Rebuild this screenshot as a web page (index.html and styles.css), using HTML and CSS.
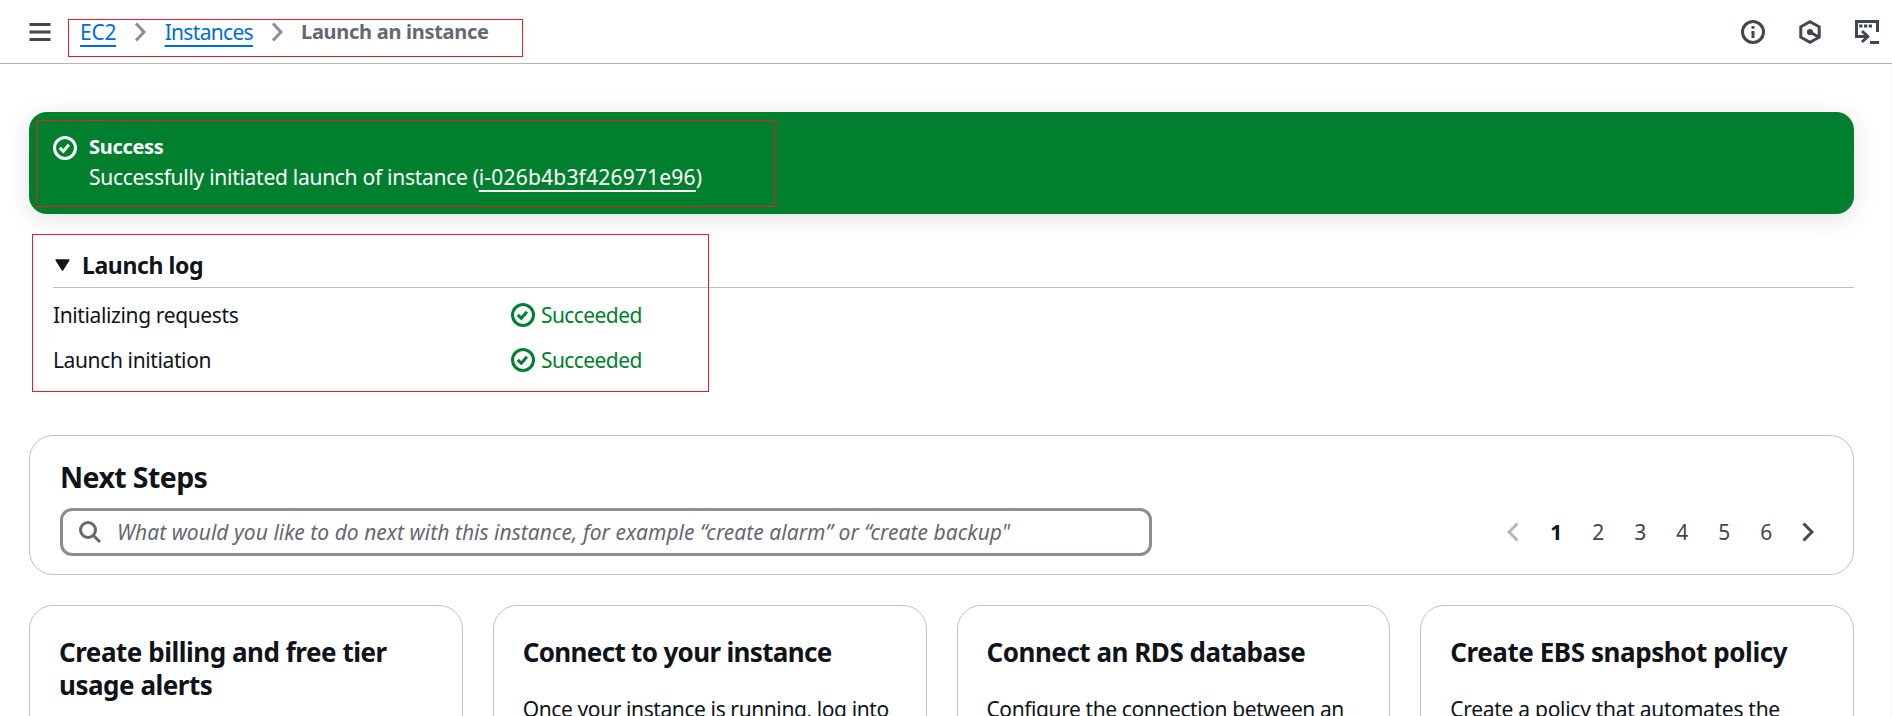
FILE: index.html
```html
<!DOCTYPE html>
<html lang="en">
<head>
<meta charset="utf-8">
<title>Launch an instance | EC2</title>
<link rel="stylesheet" href="styles.css">
</head>
<body>
<svg class="defs" aria-hidden="true">
  <symbol id="check" viewBox="0 0 16 16"><circle cx="8" cy="8" r="7"/><path d="m4.5 7.9 2.4 2.3 3.7-4.4"/></symbol>
</svg>
<header class="topbar">
  <svg class="menu" viewBox="0 0 21 18"><path d="M0 1.5h21M0 9h21M0 16.5h21"/></svg>
  <nav class="crumbs">
    <a href="#">EC2</a>
    <svg class="sep" viewBox="0 0 12 20"><path d="m2 1.5 8 8.5-8 8.5"/></svg>
    <a class="narrow" href="#">Instances</a>
    <svg class="sep" viewBox="0 0 12 20"><path d="m2 1.5 8 8.5-8 8.5"/></svg>
    <b class="current">Launch an instance</b>
  </nav>
  <div class="tools">
    <svg viewBox="0 0 24 24"><circle cx="12" cy="12" r="10.5"/><path d="M12 6v2.7M12 11v7"/></svg>
    <svg viewBox="0 0 24 24"><path d="M12 1.7 21.2 6.8v10.4L12 22.3 2.8 17.2V6.8zM12 12l8.5 5"/><circle class="solid" cx="12" cy="12" r="3.1"/></svg>
    <svg viewBox="0 0 24 24"><path d="M22.5 12V1.5h-21v15H13M7 11l5.8 5.5L7 22M15 22.5h9"/><path class="solid" d="M4.2 4.5h3.3v3H4.2zM9 4.5h3.3v3H9zM13.7 4.5H17v3h-3.3z"/></svg>
  </div>
</header>
<main class="page">
  <section class="banner">
    <svg class="status"><use href="#check"/></svg>
    <div>
      <b>Success</b>
      <p>Successfully initiated launch of instance (<a href="#">i-026b4b3f426971e96</a>)</p>
    </div>
  </section>
  <section class="log">
    <div class="log-head">
      <svg class="caret" viewBox="0 0 15 12"><path d="M1.2 1h12.6L7.5 11z"/></svg>
      <h3>Launch log</h3>
    </div>
    <dl class="rows">
      <dt>Initializing requests</dt>
      <dd><svg class="status"><use href="#check"/></svg><span>Succeeded</span></dd>
      <dt>Launch initiation</dt>
      <dd><svg class="status"><use href="#check"/></svg><span>Succeeded</span></dd>
    </dl>
  </section>
  <section class="next">
    <h2>Next Steps</h2>
    <div class="next-row">
      <div class="search">
        <svg viewBox="0 0 22 22"><circle cx="9" cy="9" r="7.5"/><path d="m14.2 14.2 6.8 6.8"/></svg>
        <span>What would you like to do next with this instance, for example “create alarm” or “create backup"</span>
      </div>
      <div class="pages">
        <svg class="off" viewBox="0 0 12 20"><path d="m10.5 1.5-8.500 8.500 8.500 8.500"/></svg>
        <b>1</b><span>2</span><span>3</span><span>4</span><span>5</span><span>6</span>
        <svg viewBox="0 0 12 20"><path d="m1.500 1.500 8.500 8.500-8.500 8.500"/></svg>
      </div>
    </div>
  </section>
  <div class="cards">
    <article><h4>Create billing and free tier<br>usage alerts</h4></article>
    <article class="tight"><h4>Connect to your instance</h4><p>Once your instance is running, log into</p></article>
    <article><h4>Connect an RDS database</h4><p>Configure the connection between an</p></article>
    <article class="loose"><h4>Create EBS snapshot policy</h4><p>Create a policy that automates the</p></article>
  </div>
</main>
<div class="mark mark-crumbs"></div>
<div class="mark mark-banner"></div>
<div class="mark mark-log"></div>
</body>
</html>
```
FILE: styles.css
```css
* { box-sizing: border-box; margin: 0; padding: 0; }
html { overflow: hidden; }
body {
  height: 716px;
  overflow: hidden;
  background: #fff;
  color: #0f141a;
  font: 21px/30px "Noto Sans", "Open Sans", sans-serif;
  letter-spacing: -0.28px;
  white-space: nowrap;
}
svg { display: block; flex: none; fill: none; stroke: currentColor; }
.defs { position: absolute; width: 0; height: 0; }
.solid { fill: currentColor; stroke: none; }

.topbar {
  display: flex;
  align-items: center;
  height: 64px;
  padding: 0 13px 0 29px;
  border-bottom: 1px solid #b4b4bb;
  color: #424650;
}
.menu { width: 22px; height: 18px; stroke-width: 3; }
.crumbs { display: flex; align-items: center; margin-left: 29px; color: #656871; }
.crumbs a {
  color: #006ce0;
  text-decoration: underline 2px;
  text-underline-offset: 5px;
  text-decoration-skip-ink: none;
}
.crumbs .narrow { margin-left: 0.5px; letter-spacing: -0.68px; }
.sep { width: 12px; height: 20px; margin: 0 18px; color: #8c8c94; stroke-width: 3; }
.current { font-size: 20px; }
.tools { display: flex; gap: 33px; margin-left: auto; }
.tools svg { width: 24px; height: 24px; stroke-width: 3; }

.page { height: 652px; padding: 48px 37px 0 29px; border-right: 1px solid #f6f6f9; }
.status { width: 24px; height: 24px; stroke-width: 2; }

.banner {
  display: flex;
  gap: 12px;
  height: 102px;
  padding: 20px 24px;
  border-radius: 18px;
  background: #00802f;
  color: #fff;
  box-shadow: 0 4px 24px rgba(0, 7, 22, 0.12);
}
.banner .status { margin-top: 4px; }
.banner b { display: block; font-size: 20px; letter-spacing: -0.3px; }
.banner a {
  color: inherit;
  letter-spacing: 0.2px;
  text-decoration: underline 2px;
  text-underline-offset: 5px;
  text-decoration-skip-ink: none;
}

.log { margin-top: 36px; padding-left: 24px; }
.log-head { display: flex; align-items: center; gap: 12px; height: 38px; padding: 0 0 8px 2px; border-bottom: 1px solid #c0c0c7; }
.caret { width: 15px; height: 12px; margin-top: 1px; fill: currentColor; stroke-width: 1.5; stroke-linejoin: round; }
.log h3 { font-size: 23px; letter-spacing: -0.4px; }
.rows { display: grid; grid-template-columns: 458px auto; row-gap: 15px; justify-content: start; margin-top: 12px; letter-spacing: -0.38px; }
.rows dd { display: flex; align-items: center; gap: 6px; color: #00802f; letter-spacing: -0.58px; }

.next { height: 140px; margin-top: 60px; padding: 23px 29px 0 30px; border: 1px solid #c0c0c7; border-radius: 24px; }
.next h2 { font-size: 28.5px; line-height: 36px; letter-spacing: -0.6px; }
.next-row { display: flex; align-items: center; justify-content: space-between; margin-top: 13px; }
.search {
  display: flex;
  align-items: center;
  gap: 16px;
  width: 1092px;
  height: 48px;
  padding: 0 16px;
  border: 3px solid #8c8c94;
  border-radius: 12px;
  color: #656871;
  font-style: italic;
  letter-spacing: 0.03px;
}
.search svg { width: 22px; height: 22px; stroke-width: 3; }
.pages { display: flex; align-items: center; color: #424650; margin-right: 3px; }
.pages b, .pages span { width: 42px; text-align: center; }
.pages b { color: #0f141a; }
.pages svg { width: 12px; height: 20px; margin: 0 7px 0 15px; stroke-width: 3; }
.pages .off { margin: 0 16px 0 0; color: #b4b4bb; }

.cards { display: grid; grid-template-columns: repeat(4, 1fr); gap: 30px; margin-top: 30px; }
.cards article { height: 180px; padding: 30px 29px; border: 1px solid #c0c0c7; border-radius: 24px; }
.cards h4 { font-size: 26px; line-height: 33px; letter-spacing: -0.47px; }
.cards p { margin-top: 25px; letter-spacing: -0.4px; }
.cards .tight h4 { letter-spacing: -0.67px; }
.cards .loose h4 { letter-spacing: -0.43px; }
.cards .loose p { letter-spacing: -0.28px; }

/* red annotation frames */
.mark { position: absolute; border: 1px solid #ed1c24; }
.mark-crumbs { left: 68px; top: 19px; width: 455px; height: 38px; }
.mark-banner { left: 36px; top: 120px; width: 739px; height: 87px; }
.mark-log { left: 32px; top: 234px; width: 677px; height: 158px; }
```
